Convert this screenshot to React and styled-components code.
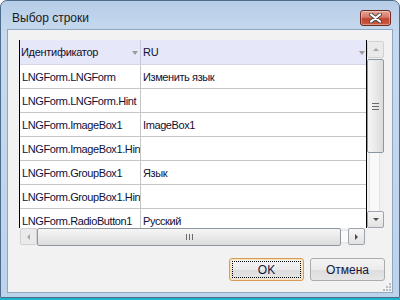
import React from "react";
import styled, { createGlobalStyle, css } from "styled-components";

const GlobalStyle = createGlobalStyle`
  html, body {
    margin: 0;
    padding: 0;
    background: #ffffff;
  }
  body {
    font-family: "Liberation Sans", Arial, sans-serif;
  }
`;

const rows = [
  ["LNGForm.LNGForm", "Изменить язык"],
  ["LNGForm.LNGForm.Hint", ""],
  ["LNGForm.ImageBox1", "ImageBox1"],
  ["LNGForm.ImageBox1.Hint", ""],
  ["LNGForm.GroupBox1", "Язык"],
  ["LNGForm.GroupBox1.Hint", ""],
  ["LNGForm.RadioButton1", "Русский"],
];

const Desktop = styled.div`
  width: 400px;
  height: 300px;
  box-sizing: border-box;
  border-bottom: 2px solid #1fb2cc;
  overflow: hidden;
`;

const Window = styled.div`
  width: 400px;
  height: 298px;
  box-sizing: border-box;
  border: 1px solid #4f6b8c;
  border-radius: 7px 7px 0 0;
  background: linear-gradient(#b7cde8, #c6d9ee 30px, #bdd3ec);
  padding: 0 6px 4px;
  display: flex;
  flex-direction: column;
`;

const TitleBar = styled.div`
  height: 28px;
  box-sizing: border-box;
  padding: 9px 2px 0 5px;
  display: flex;
  justify-content: space-between;
  align-items: flex-start;
`;

const Title = styled.div`
  font-size: 12px;
  line-height: 16px;
  color: #1b1b1b;
`;

const CloseButton = styled.div`
  width: 31px;
  height: 16px;
  box-sizing: border-box;
  border: 1px solid #6e2b22;
  border-radius: 3px;
  background: linear-gradient(#e7a394, #d27a68 45%, #c4442f 55%, #c95b44);
  box-shadow: inset 0 0 0 1px rgba(255, 255, 255, 0.35);
  display: flex;
  align-items: center;
  justify-content: center;
`;

const Client = styled.div`
  flex: 1;
  position: relative;
  border: 1px solid #90a6c2;
  background: #f2f2f2;
  padding: 10px 7px 0 11px;
  display: flex;
  flex-direction: column;
`;

const GridFrame = styled.div`
  display: grid;
  grid-template-columns: 348px 17px;
  grid-template-rows: 188px 18px;
`;

const Table = styled.div`
  border-left: 1px solid #000;
  border-right: 1px solid #000;
  background: #fff;
  overflow: hidden;
`;

const HeaderRow = styled.div`
  display: flex;
  height: 24px;
  background: #e6e7f9;
  border-bottom: 1px solid #d4d5e6;
`;

const HeaderCell = styled.div`
  box-sizing: border-box;
  display: flex;
  align-items: center;
  justify-content: space-between;
  padding: 0 ${(p) => (p.$first ? 2 : 1)}px 0 ${(p) => (p.$first ? 1 : 2)}px;
  font-size: 11px;
  letter-spacing: -0.3px;
  color: #101030;
  ${(p) =>
    p.$first
      ? css`
          width: 121px;
          border-right: 1px solid #c9cad9;
        `
      : css`
          flex: 1;
        `}
`;

const SortArrow = styled.span`
  width: 0;
  height: 0;
  border-left: 3.5px solid transparent;
  border-right: 3.5px solid transparent;
  border-top: 4px solid #9c9c9c;
  margin-top: 2px;
`;

const Row = styled.div`
  display: flex;
  height: 23px;
  border-bottom: 1px solid #c6c6c6;
`;

const Cell = styled.div`
  box-sizing: border-box;
  display: flex;
  align-items: center;
  overflow: hidden;
  white-space: nowrap;
  font-size: 11px;
  letter-spacing: -0.4px;
  color: #101038;
  padding-left: 2px;
  ${(p) =>
    p.$first
      ? css`
          width: 121px;
          flex: none;
          border-right: 1px solid #c6c6c6;
        `
      : css`
          flex: 1;
        `}
`;

const VScroll = styled.div`
  display: flex;
  flex-direction: column;
  padding-top: 1px;
  background: #f0f0f0;
`;

const HScroll = styled.div`
  display: flex;
  padding: 0 2px 0 1px;
  background: #f0f0f0;
`;

const ScrollButton = styled.div`
  width: 17px;
  height: 17px;
  flex: none;
  box-sizing: border-box;
  border: 1px solid ${(p) => (p.$dim ? "#d0d2d6" : "#9ea4ac")};
  border-radius: 2px;
  background: ${(p) =>
    p.$dim ? "#eaeaea" : "linear-gradient(#f6f6f6, #e2e2e2)"};
  display: flex;
  align-items: center;
  justify-content: center;
`;

const Arrow = styled.span`
  width: 0;
  height: 0;
  ${(p) =>
    p.$dir === "up" &&
    css`
      border-left: 3px solid transparent;
      border-right: 3px solid transparent;
      border-bottom: 3px solid ${p.$color};
    `}
  ${(p) =>
    p.$dir === "down" &&
    css`
      border-left: 3px solid transparent;
      border-right: 3px solid transparent;
      border-top: 3px solid ${p.$color};
    `}
  ${(p) =>
    p.$dir === "left" &&
    css`
      border-top: 3px solid transparent;
      border-bottom: 3px solid transparent;
      border-right: 3px solid ${p.$color};
    `}
  ${(p) =>
    p.$dir === "right" &&
    css`
      border-top: 3px solid transparent;
      border-bottom: 3px solid transparent;
      border-left: 3px solid ${p.$color};
    `}
`;

const Thumb = styled.div`
  box-sizing: border-box;
  border: 1px solid #8e979f;
  border-radius: 2px;
  display: flex;
  align-items: center;
  justify-content: center;
  ${(p) =>
    p.$vertical
      ? css`
          height: 94px;
          margin-top: 1px;
          background: linear-gradient(90deg, #f6f6f6, #e9e9e9 50%, #dcdcdc);
          flex-direction: column;
          gap: 2px;
        `
      : css`
          width: 304px;
          background: linear-gradient(#f6f6f6, #e9e9e9 50%, #dcdcdc);
          flex-direction: row;
          gap: 2px;
        `}
`;

const Grip = styled.span`
  background: #6b6b6b;
  ${(p) =>
    p.$vertical
      ? css`
          width: 7px;
          height: 1px;
        `
      : css`
          width: 1px;
          height: 6px;
        `}
`;

const Track = styled.div`
  flex: 1;
  ${(p) =>
    p.$vertical
      ? css`
          background: linear-gradient(
            90deg,
            #f0f0f0 0 2px,
            #e4e4e4 2px 3px,
            #f9f9f9 3px 12px,
            #e4e4e4 12px 13px,
            #f0f0f0 13px
          );
        `
      : css`
          background: linear-gradient(
            #f0f0f0 0 2px,
            #e4e4e4 2px 3px,
            #fbfbfb 3px 14px,
            #e4e4e4 14px 15px,
            #f0f0f0 15px
          );
        `}
`;

const Footer = styled.div`
  display: flex;
  justify-content: flex-end;
  gap: 6px;
  margin-top: 12px;
`;

const Button = styled.div`
  position: relative;
  width: 75px;
  height: 23px;
  box-sizing: border-box;
  border: 1px solid ${(p) => (p.$default ? "#d89b55" : "#acacac")};
  border-radius: 3px;
  background: linear-gradient(#f4f4f4, #ebebeb 50%, #dddddd 51%, #e6e6e6);
  display: flex;
  align-items: center;
  justify-content: center;
  font-size: 12px;
  color: #151540;
  ${(p) =>
    p.$default &&
    css`
      box-shadow: inset 0 0 0 1px #fbe2bd;
      &::after {
        content: "";
        position: absolute;
        inset: 2px;
        border: 1px dotted #000;
      }
    `}
`;

const SizeGrip = styled.svg`
  position: absolute;
  right: 1px;
  bottom: 1px;
`;

function CloseGlyph() {
  return (
    <svg width="13" height="10" viewBox="0 0 13 10">
      <path
        d="M2 1.5 L11 8.5 M11 1.5 L2 8.5"
        stroke="#4a4a4a"
        strokeWidth="4"
        strokeLinecap="round"
      />
      <path
        d="M2 1.5 L11 8.5 M11 1.5 L2 8.5"
        stroke="#ffffff"
        strokeWidth="2.2"
        strokeLinecap="round"
      />
    </svg>
  );
}

export default function App() {
  return (
    <>
      <GlobalStyle />
      <Desktop>
        <Window>
          <TitleBar>
            <Title>Выбор строки</Title>
            <CloseButton>
              <CloseGlyph />
            </CloseButton>
          </TitleBar>
          <Client>
            <GridFrame>
              <Table>
                <HeaderRow>
                  <HeaderCell $first>
                    Идентификатор
                    <SortArrow />
                  </HeaderCell>
                  <HeaderCell>
                    RU
                    <SortArrow />
                  </HeaderCell>
                </HeaderRow>
                {rows.map(([id, text]) => (
                  <Row key={id}>
                    <Cell $first>{id}</Cell>
                    <Cell>{text}</Cell>
                  </Row>
                ))}
              </Table>
              <VScroll>
                <ScrollButton $dim>
                  <Arrow $dir="up" $color="#a8a8a8" />
                </ScrollButton>
                <Thumb $vertical>
                  <Grip $vertical />
                  <Grip $vertical />
                  <Grip $vertical />
                </Thumb>
                <Track $vertical />
                <ScrollButton>
                  <Arrow $dir="down" $color="#4c4c4c" />
                </ScrollButton>
              </VScroll>
              <HScroll>
                <ScrollButton $dim>
                  <Arrow $dir="left" $color="#a8a8a8" />
                </ScrollButton>
                <Thumb>
                  <Grip />
                  <Grip />
                  <Grip />
                </Thumb>
                <Track />
                <ScrollButton>
                  <Arrow $dir="right" $color="#4c4c4c" />
                </ScrollButton>
              </HScroll>
            </GridFrame>
            <Footer>
              <Button $default>OK</Button>
              <Button>Отмена</Button>
            </Footer>
            <SizeGrip width="8" height="8" viewBox="0 0 8 8">
              <rect x="6" y="0" width="2" height="2" fill="#b8bcc4" />
              <rect x="3" y="3" width="2" height="2" fill="#b8bcc4" />
              <rect x="6" y="3" width="2" height="2" fill="#b8bcc4" />
              <rect x="0" y="6" width="2" height="2" fill="#b8bcc4" />
              <rect x="3" y="6" width="2" height="2" fill="#b8bcc4" />
              <rect x="6" y="6" width="2" height="2" fill="#b8bcc4" />
            </SizeGrip>
          </Client>
        </Window>
      </Desktop>
    </>
  );
}
